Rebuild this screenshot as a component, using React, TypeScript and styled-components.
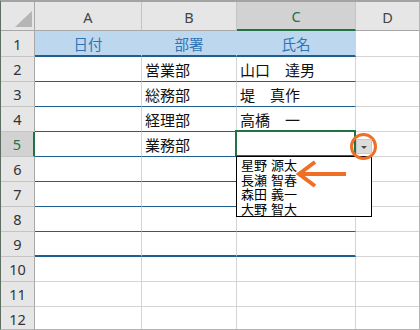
import React from "react";
import styled, { createGlobalStyle, css } from "styled-components";

const BLUE = "#1f5f8f";
const GRID = "#d4d4d4";
const GREEN = "#217346";
const ORANGE = "#ef6f26";
const HEAD_BG = "#e6e6e6";
const HEAD_SEL = "#d2d2d2";
const FILL = "#bdd7ee";

const GlobalStyle = createGlobalStyle`
  html, body { margin: 0; padding: 0; background: #fff; }
  body { font-family: "Noto Sans CJK JP", "Noto Sans", sans-serif; overflow: hidden; }
`;

const Frame = styled.div`
  position: relative;
  width: 420px;
  height: 330px;
  box-sizing: border-box;
  border-top: 2px solid #a3a3a3;
  border-left: 1px solid #5f6e63;
  border-right: 1px solid #b4b4b4;
  border-bottom: 1px solid #b4b4b4;
  overflow: hidden;
  background: #fff;
`;

const Sheet = styled.div`
  display: grid;
  grid-template-columns: 34px 107px 95px 119px 1fr;
  grid-template-rows: 29px 26px repeat(11, 25px);
`;

const Corner = styled.div`
  box-sizing: border-box;
  display: flex;
  align-items: flex-end;
  justify-content: flex-end;
  padding: 0 2px 3px 0;
  background: ${HEAD_BG};
  border-right: 1px solid #a8a8a8;
  border-bottom: 1px solid #a8a8a8;
  &::after {
    content: "";
    width: 17px;
    height: 16px;
    background: #b5b5b5;
    clip-path: polygon(100% 0, 100% 100%, 0 100%);
  }
`;

const ColHeader = styled.div<{ $sel?: boolean; $last?: boolean }>`
  box-sizing: border-box;
  display: flex;
  align-items: center;
  justify-content: center;
  font-family: "Noto Sans", "Liberation Sans", sans-serif;
  font-size: 14.5px;
  color: ${(p) => (p.$sel ? GREEN : "#444")};
  background: ${(p) => (p.$sel ? HEAD_SEL : HEAD_BG)};
  border-right: ${(p) => (p.$last ? "none" : "1px solid #c4c4c4")};
  border-bottom: ${(p) => (p.$sel ? `2px solid ${GREEN}` : "1px solid #a8a8a8")};
  padding-top: 1px;
`;

const RowHeader = styled.div<{ $sel?: boolean }>`
  box-sizing: border-box;
  display: flex;
  align-items: center;
  justify-content: center;
  font-family: "Noto Sans", "Liberation Sans", sans-serif;
  font-size: 14.5px;
  color: ${(p) => (p.$sel ? GREEN : "#333")};
  background: ${(p) => (p.$sel ? HEAD_SEL : HEAD_BG)};
  border-right: ${(p) => (p.$sel ? `2px solid ${GREEN}` : "1px solid #a8a8a8")};
  border-bottom: 1px solid #c4c4c4;
`;

const bottomBorder = (row: number, col: number) => {
  if (col === 3) return `1px solid ${GRID}`;
  if (row === 1 || row === 9) return `2px solid ${BLUE}`;
  if (row >= 2 && row <= 8) return `1px solid ${BLUE}`;
  return `1px solid ${GRID}`;
};

const Cell = styled.div<{ $row: number; $col: number }>`
  position: relative;
  box-sizing: border-box;
  display: flex;
  align-items: center;
  padding-left: 3px;
  font-size: 15px;
  color: #111;
  white-space: nowrap;
  border-right: 1px solid ${GRID};
  border-bottom: ${(p) => bottomBorder(p.$row, p.$col)};
  ${(p) =>
    p.$row === 1 &&
    p.$col < 3 &&
    css`
      background: ${FILL};
      border-right-color: ${FILL};
      justify-content: center;
      padding-left: 0;
      color: #2f75b5;
      font-size: 14.5px;
    `}
  ${(p) =>
    p.$col === 3 &&
    css`
      border-right: none;
    `}
`;

const ActiveBox = styled.div`
  position: absolute;
  left: -2px;
  top: -2px;
  right: -1px;
  bottom: -1px;
  border: 2px solid ${GREEN};
  pointer-events: none;
  z-index: 2;
`;

const Ring = styled.div`
  position: absolute;
  left: 113px;
  top: 1px;
  width: 27px;
  height: 27px;
  box-sizing: border-box;
  border: 3.5px solid ${ORANGE};
  border-radius: 50%;
  z-index: 4;
  display: flex;
  align-items: center;
  justify-content: center;
`;

const DropButton = styled.div`
  flex: none;
  width: 16px;
  height: 15px;
  box-sizing: border-box;
  background: #dcdcdc;
  border: 1px solid #c8c8c8;
  display: flex;
  align-items: center;
  justify-content: center;
  &::after {
    content: "";
    width: 0;
    height: 0;
    border-left: 3.5px solid transparent;
    border-right: 3.5px solid transparent;
    border-top: 3.5px solid #4a4a4a;
    margin-top: 1px;
  }
`;

const DropList = styled.div`
  position: absolute;
  left: -1px;
  top: 24px;
  width: 136px;
  height: 61px;
  box-sizing: border-box;
  border: 1px solid #000;
  background: #fff;
  z-index: 3;
  padding-top: 1px;
  display: flex;
  flex-direction: column;
`;

const DropItem = styled.div`
  height: 14.6px;
  line-height: 14.6px;
  padding-left: 4px;
  font-size: 13px;
  color: #000;
  word-spacing: 1px;
  white-space: nowrap;
`;

const Arrow = styled.svg`
  position: absolute;
  left: 293px;
  top: 154px;
  width: 56px;
  height: 36px;
  z-index: 5;
  overflow: visible;
`;

const columns = ["A", "B", "C", "D"];
const data: Record<string, string> = {
  "1-0": "日付",
  "1-1": "部署",
  "1-2": "氏名",
  "2-1": "営業部",
  "3-1": "総務部",
  "4-1": "経理部",
  "5-1": "業務部",
  "2-2": "山口　達男",
  "3-2": "堤　真作",
  "4-2": "高橋　一",
};
const listItems = ["星野 源太", "長瀬 智春", "森田 義一", "大野 智大"];

export default function App() {
  const rows = Array.from({ length: 12 }, (_, i) => i + 1);
  return (
    <>
      <GlobalStyle />
      <Frame>
        <Sheet>
          <Corner />
          {columns.map((c, i) => (
            <ColHeader key={c} $sel={c === "C"} $last={i === 3}>
              {c}
            </ColHeader>
          ))}
          {rows.map((r) => (
            <React.Fragment key={r}>
              <RowHeader $sel={r === 5}>{r}</RowHeader>
              {columns.map((_, ci) => {
                const active = r === 5 && ci === 2;
                return (
                  <Cell key={ci} $row={r} $col={ci}>
                    {data[`${r}-${ci}`] ?? ""}
                    {active && (
                      <>
                        <ActiveBox />
                        <Ring>
                          <DropButton />
                        </Ring>
                        <DropList>
                          {listItems.map((t) => (
                            <DropItem key={t}>{t}</DropItem>
                          ))}
                        </DropList>
                      </>
                    )}
                  </Cell>
                );
              })}
            </React.Fragment>
          ))}
        </Sheet>
        <Arrow viewBox="0 0 56 36">
          <line x1="6" y1="18" x2="52" y2="18" stroke={ORANGE} strokeWidth="4" />
          <polyline
            points="21,6 5,18 21,30"
            fill="none"
            stroke={ORANGE}
            strokeWidth="4"
            strokeLinejoin="miter"
          />
        </Arrow>
      </Frame>
    </>
  );
}
